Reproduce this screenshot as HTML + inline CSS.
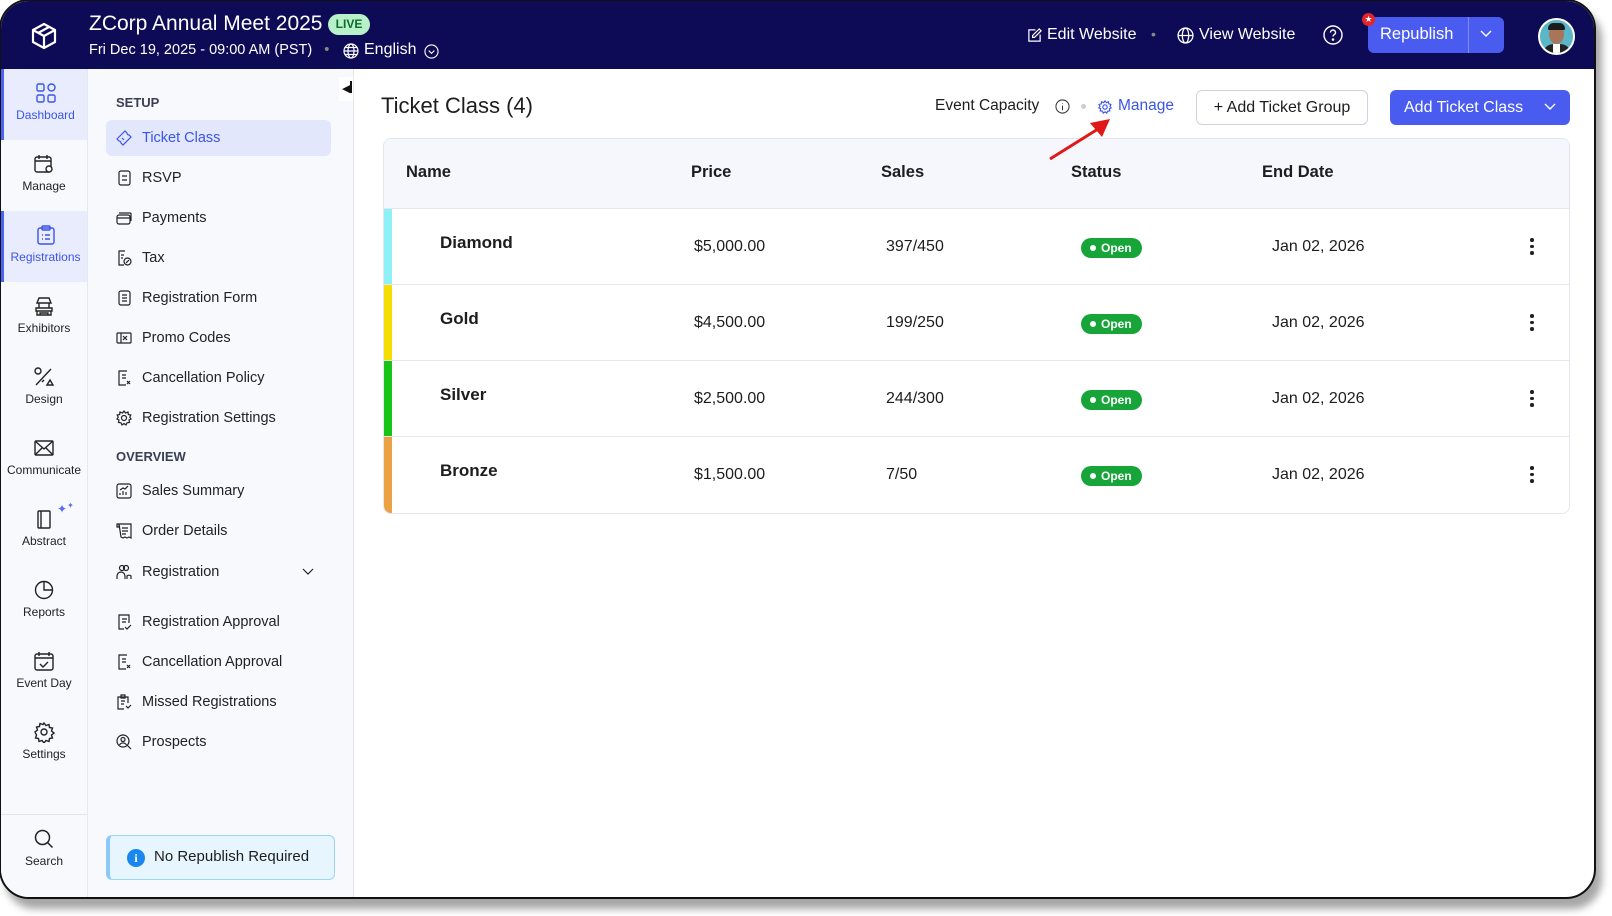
<!DOCTYPE html>
<html><head><meta charset="utf-8"><style>
*{box-sizing:border-box;margin:0;padding:0}
body{width:1612px;height:916px;background:#fff;font-family:"Liberation Sans",sans-serif;position:relative;overflow:hidden;color:#1d1d1f}
.win{position:absolute;left:-1px;top:-1px;width:1597px;height:900px;border:2px solid #111;border-radius:30px;overflow:hidden;background:#fff;box-shadow:6px 10px 8px rgba(0,0,0,.35)}
.hdr{position:absolute;left:0;top:0;width:100%;height:68px;background:#0d0b55;color:#fff}
.a{position:absolute;white-space:nowrap}
.rail{position:absolute;left:0;top:68px;width:87px;bottom:0;background:#f8f9fd;border-right:1px solid #e6e8ef}
.ri{position:absolute;left:0;width:86px;height:71px;text-align:center;font-size:12px;color:#222}
.ri svg{display:block;margin:13px auto 4px}
.ri.act{background:#e9ecfd;color:#3b55e6;border-left:3px solid #4a63f0}
.side{position:absolute;left:87px;top:68px;width:266px;bottom:0;background:#f8f9fd;border-right:1px solid #e6e8ef}
.si{position:absolute;left:18px;width:225px;height:36px;font-size:14.5px;color:#222;line-height:36px;padding-left:36px}
.si svg{position:absolute;left:10px;top:10px}
.si.act{background:#e3e7fc;color:#3b55e6;border-radius:6px}
.sh{position:absolute;left:28px;font-size:13px;font-weight:bold;color:#3a3f55}
.tbl{position:absolute;left:382px;top:137px;width:1187px;height:376px;border:1px solid #e4e7ee;border-radius:8px;overflow:hidden}
.th{position:absolute;top:0;left:0;right:0;height:70px;background:#f5f7fd;border-bottom:1px solid #e4e7ee;font-weight:bold;font-size:16.5px}
.row{position:absolute;left:0;right:0;height:76px;border-bottom:1px solid #e4e7ee;font-size:16px}
.strip{position:absolute;left:0;top:0;width:8px;height:100%}
.badge{position:absolute;left:697px;top:29px;width:61px;height:20px;border-radius:10px;background:#17a53a;color:#fff;font-size:12px;font-weight:bold;line-height:20px;padding-left:20px}
.badge:before{content:"";position:absolute;left:9px;top:7px;width:6px;height:6px;border-radius:50%;background:#fff}
.dots{position:absolute;left:1146px;top:29px;width:4px}
.dots i{display:block;width:3.5px;height:3.5px;background:#222;border-radius:50%;margin-bottom:3px}
</style></head><body>
<div class="win">
<div class="hdr">
 <svg class="a" style="left:28px;top:20px" width="30" height="30" viewBox="0 0 30 30" fill="none" stroke="#fff" stroke-width="2.2" stroke-linejoin="round"><path d="M15 3 L26 9 V21 L15 27 L4 21 V9 Z"/><path d="M4 9 L15 15 L26 9 M15 15 V27 M9 12 L20 6"/></svg>
 <div class="a" style="left:88px;top:11px;font-size:21px">ZCorp Annual Meet 2025</div>
 <div class="a" style="left:327px;top:13px;width:42px;height:21px;border-radius:11px;background:#b8f0c9;color:#0d6b2e;font-size:12px;font-weight:bold;text-align:center;line-height:21px">LIVE</div>
 <div class="a" style="left:88px;top:41px;font-size:14.5px">Fri Dec 19, 2025 - 09:00 AM (PST) <span style="color:#888;margin:0 8px">•</span></div>
 <svg class="a" style="left:342px;top:42px" width="16" height="16" viewBox="0 0 16 16" fill="none" stroke="#fff" stroke-width="1.2"><circle cx="8" cy="8" r="7"/><ellipse cx="8" cy="8" rx="3" ry="7"/><path d="M1 8h14M2 4.5h12M2 11.5h12"/></svg>
 <div class="a" style="left:363px;top:40px;font-size:16px">English</div>
 <svg class="a" style="left:423px;top:43px" width="15" height="15" viewBox="0 0 16 16" fill="none" stroke="#fff" stroke-width="1.2"><circle cx="8" cy="8" r="7"/><path d="M5 7l3 3 3-3"/></svg>
 <svg class="a" style="left:1026px;top:27px" width="15" height="15" viewBox="0 0 16 16" fill="none" stroke="#fff" stroke-width="1.3"><path d="M9 2H2v12h12V7"/><path d="M13 1l2 2-7 7H6V8z"/></svg>
 <div class="a" style="left:1046px;top:25px;font-size:16px">Edit Website</div>
 <div class="a" style="left:1150px;top:25px;font-size:14px;color:#888">•</div>
 <svg class="a" style="left:1176px;top:26px" width="17" height="17" viewBox="0 0 16 16" fill="none" stroke="#fff" stroke-width="1.2"><circle cx="8" cy="8" r="7"/><ellipse cx="8" cy="8" rx="3" ry="7"/><path d="M1 8h14"/></svg>
 <div class="a" style="left:1198px;top:25px;font-size:16px">View Website</div>
 <svg class="a" style="left:1322px;top:24px" width="20" height="20" viewBox="0 0 20 20" fill="none" stroke="#fff" stroke-width="1.4"><circle cx="10" cy="10" r="9"/><path d="M7.5 7.5a2.5 2.5 0 1 1 3.5 2.3c-.7.4-1 .9-1 1.7"/><circle cx="10" cy="14.5" r=".6" fill="#fff"/></svg>
 <div class="a" style="left:1367px;top:16px;width:136px;height:36px;border-radius:6px;background:#4a5cf0"></div>
 <div class="a" style="left:1379px;top:24px;font-size:16.5px">Republish</div>
 <div class="a" style="left:1467px;top:16px;width:1px;height:36px;background:#7f8df5"></div>
 <svg class="a" style="left:1479px;top:29px" width="12" height="8" viewBox="0 0 12 8" fill="none" stroke="#fff" stroke-width="1.4"><path d="M1 1l5 5 5-5"/></svg>
 <div class="a" style="left:1361px;top:12px;width:13px;height:13px;border-radius:50%;background:#e3242b;color:#fff;font-size:9px;text-align:center;line-height:13px">★</div>
 <div class="a" style="left:1537px;top:17px;width:37px;height:37px;border-radius:50%;background:#5bb6c8;border:2px solid #fff;overflow:hidden"><div style="position:absolute;left:9px;top:5px;width:15px;height:19px;border-radius:50%;background:#a8755a"></div><div style="position:absolute;left:8px;top:3px;width:17px;height:7px;border-radius:8px 8px 2px 2px;background:#1b1b1b"></div><div style="position:absolute;left:2px;top:24px;width:30px;height:14px;border-radius:12px 12px 0 0;background:#222"></div><div style="position:absolute;left:13px;top:24px;width:7px;height:12px;background:#fff"></div></div>
</div>

<div class="rail">
 <div class="ri act" style="top:0"><svg width="22" height="22" viewBox="0 0 22 22" fill="none" stroke="#3b55e6" stroke-width="1.4"><rect x="2" y="2" width="7" height="7" rx="1.5"/><circle cx="16.5" cy="5.5" r="3.5"/><rect x="2" y="13" width="7" height="7" rx="1.5"/><rect x="13" y="13" width="7" height="7" rx="1.5"/></svg>Dashboard</div>
 <div class="ri" style="top:71px"><svg width="22" height="22" viewBox="0 0 22 22" fill="none" stroke="#222" stroke-width="1.4"><rect x="2" y="4" width="16" height="15" rx="2"/><path d="M2 8h16M6 2v4M14 2v4"/><circle cx="16" cy="16" r="3" fill="#fff"/></svg>Manage</div>
 <div class="ri act" style="top:142px"><svg width="22" height="22" viewBox="0 0 22 22" fill="none" stroke="#3b55e6" stroke-width="1.4"><rect x="3" y="4" width="16" height="16" rx="2"/><rect x="7" y="2" width="8" height="4" rx="1"/><path d="M7 11h1M10 11h5M7 15h1M10 15h5"/></svg>Registrations</div>
 <div class="ri" style="top:213px"><svg width="22" height="22" viewBox="0 0 22 22" fill="none" stroke="#222" stroke-width="1.4"><path d="M4 8l2-5h10l2 5zM6 8v5M16 8v5M3 13h16v3H3zM4 16v4h14v-4M7 20v-2h8v2"/></svg>Exhibitors</div>
 <div class="ri" style="top:284px"><svg width="22" height="22" viewBox="0 0 22 22" fill="none" stroke="#222" stroke-width="1.4"><circle cx="5" cy="5" r="3"/><path d="M18 3L3 19M14 19l3-5 3 5z"/><path d="M9 16l2-2"/></svg>Design</div>
 <div class="ri" style="top:355px"><svg width="22" height="22" viewBox="0 0 22 22" fill="none" stroke="#222" stroke-width="1.4"><rect x="2" y="4" width="18" height="14" rx="1"/><path d="M2 4l9 8 9-8M2 18l7-7M20 18l-7-7"/></svg>Communicate</div>
 <div class="ri" style="top:426px"><svg width="22" height="22" viewBox="0 0 22 22" fill="none" stroke="#222" stroke-width="1.4"><rect x="5" y="3" width="12" height="17" rx="1"/><path d="M8 3v17"/></svg>Abstract<span style="position:absolute;left:56px;top:6px;color:#5b6cf0;font-size:12px">✦<sup style="font-size:8px">✦</sup></span></div>
 <div class="ri" style="top:497px"><svg width="22" height="22" viewBox="0 0 22 22" fill="none" stroke="#222" stroke-width="1.4"><circle cx="11" cy="11" r="8.5"/><path d="M11 2.5V11h8.5"/></svg>Reports</div>
 <div class="ri" style="top:568px"><svg width="22" height="22" viewBox="0 0 22 22" fill="none" stroke="#222" stroke-width="1.4"><rect x="2" y="4" width="18" height="16" rx="2"/><path d="M2 8h18M6 2v4M16 2v4M7 14l3 3 5-5"/></svg>Event Day</div>
 <div class="ri" style="top:639px"><svg width="22" height="22" viewBox="0 0 22 22" fill="none" stroke="#222" stroke-width="1.4"><circle cx="11" cy="11" r="3"/><path d="M11 2l2 2.5 3-1 .5 3 3 .5-1 3 2.5 2-2.5 2 1 3-3 .5-.5 3-3-1-2 2.5-2-2.5-3 1-.5-3-3-.5 1-3L2 11l2.5-2-1-3 3-.5.5-3 3 1z"/></svg>Settings</div>
 <div style="position:absolute;left:0;top:745px;width:86px;height:1px;background:#e2e4ea"></div>
 <div class="ri" style="top:746px"><svg width="22" height="22" viewBox="0 0 22 22" fill="none" stroke="#222" stroke-width="1.5"><circle cx="9.5" cy="9.5" r="7"/><path d="M14.5 14.5l5 5"/></svg>Search</div>
</div>

<div class="side">
 <div style="position:absolute;left:251px;top:8px;width:14px;height:24px;background:#fff"></div>
 <div class="a" style="left:254px;top:12px;font-size:11px;color:#111">◀<span style="display:inline-block;width:1.5px;height:12px;background:#111;vertical-align:-1px"></span></div>
 <div class="sh" style="top:26px">SETUP</div>
 <div class="si act" style="top:51px"><svg width="16" height="16" viewBox="0 0 16 16" fill="none" stroke="#3b55e6" stroke-width="1.2"><path d="M1 9L9 1l2 2a2 2 0 0 0 2 2l2 2-8 8-2-2a2 2 0 0 0-2-2z"/><path d="M6 8l2 2"/></svg>Ticket Class</div>
 <div class="si" style="top:91px"><svg width="16" height="16" viewBox="0 0 16 16" fill="none" stroke="#222" stroke-width="1.2"><rect x="3" y="1" width="11" height="14" rx="2"/><path d="M6 6h5M6 10h5"/></svg>RSVP</div>
 <div class="si" style="top:131px"><svg width="16" height="16" viewBox="0 0 16 16" fill="none" stroke="#222" stroke-width="1.2"><rect x="1" y="5" width="13" height="9" rx="2"/><path d="M3 3h11a1 1 0 0 1 1 1v7M1 8h13"/></svg>Payments</div>
 <div class="si" style="top:171px"><svg width="16" height="16" viewBox="0 0 16 16" fill="none" stroke="#222" stroke-width="1.2"><path d="M9 1H3v14h5"/><circle cx="11.5" cy="11.5" r="3.5"/><path d="M10 13l3-3M5 5h3M5 8h2"/></svg>Tax</div>
 <div class="si" style="top:211px"><svg width="16" height="16" viewBox="0 0 16 16" fill="none" stroke="#222" stroke-width="1.2"><rect x="3" y="1" width="11" height="14" rx="2"/><path d="M6 5h5M6 8h5M6 11h5"/></svg>Registration Form</div>
 <div class="si" style="top:251px"><svg width="16" height="16" viewBox="0 0 16 16" fill="none" stroke="#222" stroke-width="1.2"><rect x="1" y="3" width="14" height="10" rx="1"/><path d="M5 3v10M7 6l4 4M11 6l-4 4"/></svg>Promo Codes</div>
 <div class="si" style="top:291px"><svg width="16" height="16" viewBox="0 0 16 16" fill="none" stroke="#222" stroke-width="1.2"><path d="M11 1H3v14h7"/><path d="M6 5h4M6 8h4M11 11l3 3M14 11l-3 3"/></svg>Cancellation Policy</div>
 <div class="si" style="top:331px"><svg width="16" height="16" viewBox="0 0 16 16" fill="none" stroke="#222" stroke-width="1.2"><circle cx="8" cy="8" r="2.5"/><path d="M8 1l1.5 2 2.5-1 .3 2.5 2.5.5-1 2.3L15 9l-2 1 .5 2.5-2.5.3-1 2.2L8 13.5 6 15l-1-2.2-2.5-.3L3 10 1 9l1.2-1.7-1-2.3 2.5-.5L4 2l2.5 1z"/></svg>Registration Settings</div>
 <div class="sh" style="top:380px">OVERVIEW</div>
 <div class="si" style="top:404px"><svg width="16" height="16" viewBox="0 0 16 16" fill="none" stroke="#222" stroke-width="1.2"><rect x="1" y="1" width="14" height="14" rx="2"/><path d="M4 12v-2M7 12V8M10 12V9M4 7l3-2 2 1 3-3"/></svg>Sales Summary</div>
 <div class="si" style="top:444px"><svg width="16" height="16" viewBox="0 0 16 16" fill="none" stroke="#222" stroke-width="1.2"><path d="M3 1h12v14l-2-1-2 1-2-1-2 1-2-1zM1 1h2v3H1zM6 5h6M6 8h6M6 11h4"/></svg>Order Details</div>
 <div class="si" style="top:485px"><svg width="16" height="16" viewBox="0 0 16 16" fill="none" stroke="#222" stroke-width="1.2"><circle cx="6" cy="4" r="2.5"/><circle cx="10" cy="4" r="2.5"/><path d="M1 15v-3a4 4 0 0 1 8 0v3M11 15v-3a3 3 0 0 1 4 0v3"/></svg>Registration<svg style="left:196px;top:14px" width="12" height="8" viewBox="0 0 12 8" fill="none" stroke="#222" stroke-width="1.2"><path d="M1 1l5 5 5-5"/></svg></div>
 <div class="si" style="top:535px"><svg width="16" height="16" viewBox="0 0 16 16" fill="none" stroke="#222" stroke-width="1.2"><path d="M8 15H3V1h10v8"/><path d="M6 5h5M6 8h4M9 13l2 2 4-4"/></svg>Registration Approval</div>
 <div class="si" style="top:575px"><svg width="16" height="16" viewBox="0 0 16 16" fill="none" stroke="#222" stroke-width="1.2"><path d="M11 1H3v14h7"/><path d="M6 5h4M6 8h4M11 11l3 3M14 11l-3 3"/></svg>Cancellation Approval</div>
 <div class="si" style="top:615px"><svg width="16" height="16" viewBox="0 0 16 16" fill="none" stroke="#222" stroke-width="1.2"><path d="M8 15H2V3h10v6M5 1h4v3H5zM5 7h4M5 10h3M10 12l2 2 3-3"/></svg>Missed Registrations</div>
 <div class="si" style="top:655px"><svg width="16" height="16" viewBox="0 0 16 16" fill="none" stroke="#222" stroke-width="1.2"><circle cx="7" cy="7" r="6"/><circle cx="7" cy="5.5" r="2"/><path d="M3.5 11a4 4 0 0 1 7 0M11.5 11.5l3.5 3.5"/></svg>Prospects</div>
 <div style="position:absolute;left:18px;top:766px;width:229px;height:45px;background:#e6f5fe;border:1.5px solid #9ad4f8;border-left:4px solid #8ccaf5;border-radius:6px;font-size:15px;line-height:42px;padding-left:44px">No Republish Required<div style="position:absolute;left:17px;top:13px;width:18px;height:18px;border-radius:50%;background:#1a86f0;color:#fff;font:bold 12px 'Liberation Serif',serif;text-align:center;line-height:18px">i</div></div>
</div>

<div class="a" style="left:380px;top:92px;font-size:22px;color:#1d1d1f">Ticket Class (4)</div>
<div class="a" style="left:934px;top:96px;font-size:15.5px">Event Capacity</div>
<svg class="a" style="left:1054px;top:98px" width="15" height="15" viewBox="0 0 16 16" fill="none" stroke="#333" stroke-width="1.1"><circle cx="8" cy="8" r="7"/><path d="M8 7v5M8 4.5v.5"/></svg>
<div class="a" style="left:1080px;top:98px;width:5px;height:5px;border-radius:50%;background:#ccc;margin-top:5px"></div>
<svg class="a" style="left:1097px;top:99px" width="14" height="14" viewBox="0 0 16 16" fill="none" stroke="#3b55e6" stroke-width="1.3"><circle cx="8" cy="8" r="2.5"/><path d="M8 1l1.5 2 2.5-1 .3 2.5 2.5.5-1 2.3L15 9l-2 1 .5 2.5-2.5.3-1 2.2L8 13.5 6 15l-1-2.2-2.5-.3L3 10 1 9l1.2-1.7-1-2.3 2.5-.5L4 2l2.5 1z"/></svg>
<div class="a" style="left:1117px;top:96px;font-size:15.5px;color:#3b55e6">Manage</div>
<div class="a" style="left:1195px;top:89px;width:172px;height:35px;border:1px solid #cfd3dc;border-radius:6px;font-size:16px;line-height:33px;text-align:center">+ Add Ticket Group</div>
<div class="a" style="left:1389px;top:89px;width:180px;height:35px;background:#4a5cf0;border-radius:6px;color:#fff;font-size:16px;line-height:35px;padding-left:14px">Add Ticket Class<svg style="position:absolute;left:154px;top:13px" width="12" height="8" viewBox="0 0 12 8" fill="none" stroke="#fff" stroke-width="1.4"><path d="M1 1l5 5 5-5"/></svg></div>

<div class="tbl">
 <div class="th"><span class="a" style="left:22px;top:24px">Name</span><span class="a" style="left:307px;top:24px">Price</span><span class="a" style="left:497px;top:24px">Sales</span><span class="a" style="left:687px;top:24px">Status</span><span class="a" style="left:878px;top:24px">End Date</span></div>
 <div class="row" style="top:70px"><div class="strip" style="background:#8ef1f7"></div><span class="a" style="left:56px;top:24px;font-weight:bold;font-size:17px">Diamond</span><span class="a" style="left:310px;top:29px">$5,000.00</span><span class="a" style="left:502px;top:29px">397/450</span><span class="badge">Open</span><span class="a" style="left:888px;top:29px">Jan 02, 2026</span><div class="dots"><i></i><i></i><i></i></div></div>
 <div class="row" style="top:146px"><div class="strip" style="background:#f6dd00"></div><span class="a" style="left:56px;top:24px;font-weight:bold;font-size:17px">Gold</span><span class="a" style="left:310px;top:29px">$4,500.00</span><span class="a" style="left:502px;top:29px">199/250</span><span class="badge">Open</span><span class="a" style="left:888px;top:29px">Jan 02, 2026</span><div class="dots"><i></i><i></i><i></i></div></div>
 <div class="row" style="top:222px"><div class="strip" style="background:#18c418"></div><span class="a" style="left:56px;top:24px;font-weight:bold;font-size:17px">Silver</span><span class="a" style="left:310px;top:29px">$2,500.00</span><span class="a" style="left:502px;top:29px">244/300</span><span class="badge">Open</span><span class="a" style="left:888px;top:29px">Jan 02, 2026</span><div class="dots"><i></i><i></i><i></i></div></div>
 <div class="row" style="top:298px;border-bottom:none"><div class="strip" style="background:#eaa244"></div><span class="a" style="left:56px;top:24px;font-weight:bold;font-size:17px">Bronze</span><span class="a" style="left:310px;top:29px">$1,500.00</span><span class="a" style="left:502px;top:29px">7/50</span><span class="badge">Open</span><span class="a" style="left:888px;top:29px">Jan 02, 2026</span><div class="dots"><i></i><i></i><i></i></div></div>
</div>
<svg class="a" style="left:1045px;top:112px;z-index:5" width="72" height="50" viewBox="0 0 72 50"><path d="M4 46L52 16" stroke="#e01818" stroke-width="3"/><path d="M64 6L44 10 56 24z" fill="#e01818"/></svg>
</div>
</body></html>
